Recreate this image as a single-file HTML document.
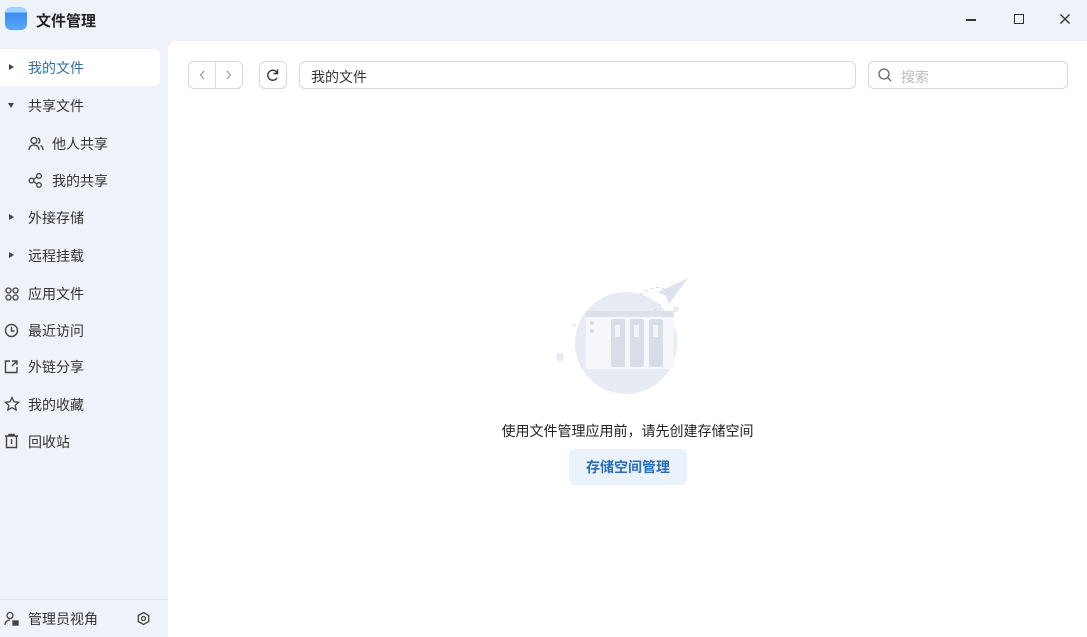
<!DOCTYPE html>
<html><head><meta charset="utf-8"><style>
*{margin:0;padding:0;box-sizing:border-box}
body{width:1087px;height:637px;overflow:hidden;background:#eff2f8;font-family:"Liberation Sans","Noto Sans CJK SC",sans-serif;position:relative;color:#333}
.abs{position:absolute}
.title{left:36px;top:10px;font-size:15px;font-weight:bold;color:#222}
.logo{left:5px;top:7px;width:22px;height:23px;border-radius:6px;background:linear-gradient(#9fd4ff 0 25%,#3a8ff0 25%,#5aa9f7)}
.main{left:168px;top:41px;width:919px;height:596px;background:#fff;border-top-left-radius:9px}
.nav{left:0;width:160px;height:37px;font-size:14px;color:#333;display:flex;align-items:center}
.nav .t{position:absolute;left:28px}
.nav.sub .t{left:52px}
.sel{background:#fff;border-radius:0 6px 6px 0}
.sel .t{color:#2f6fa8}
.tri{position:absolute;left:9px;width:0;height:0}
.tr{border-left:5px solid #444;border-top:3.5px solid transparent;border-bottom:3.5px solid transparent}
.td{border-top:5px solid #444;border-left:3.5px solid transparent;border-right:3.5px solid transparent;left:8px}
.box{border:1px solid #d8d8d8;border-radius:6px;background:#fff}
svg{position:absolute}
</style></head><body>
<div class="abs logo"></div>
<div class="abs title">文件管理</div>
<div class="abs" style="left:966px;top:19px;width:10px;height:1.5px;background:#333"></div>
<div class="abs" style="left:1014px;top:14px;width:10px;height:10px;border:1.3px solid #333"></div>
<svg style="left:1059px;top:13px" width="12" height="12"><path d="M1.5 1.5L10.5 10.5M10.5 1.5L1.5 10.5" stroke="#333" stroke-width="1.4"/></svg>

<div class="abs nav sel" style="top:49px"><span class="tri tr" style="top:15px"></span><span class="t">我的文件</span></div>
<div class="abs nav" style="top:87px"><span class="tri td" style="top:16px"></span><span class="t">共享文件</span></div>
<div class="abs nav sub" style="top:125px"><svg style="left:28px;top:11px" width="16" height="15" fill="none" stroke="#444" stroke-width="1.3"><circle cx="6" cy="4.5" r="3"/><path d="M1 14c0-3 2-5 5-5s5 2 5 5M10 2a3 3 0 010 5.5M12.5 9.5c1.5.7 2.5 2.3 2.5 4.5"/></svg><span class="t">他人共享</span></div>
<div class="abs nav sub" style="top:162px"><svg style="left:28px;top:11px" width="15" height="15" fill="none" stroke="#444" stroke-width="1.3"><circle cx="3.5" cy="7.5" r="2.3"/><circle cx="11" cy="3" r="2.3"/><circle cx="11" cy="12" r="2.3"/><path d="M5.5 6.5L9 4M5.5 8.5L9 11"/></svg><span class="t">我的共享</span></div>
<div class="abs nav" style="top:199px"><span class="tri tr" style="top:15px"></span><span class="t">外接存储</span></div>
<div class="abs nav" style="top:237px"><span class="tri tr" style="top:15px"></span><span class="t">远程挂载</span></div>
<div class="abs nav" style="top:275px"><svg style="left:5px;top:12px" width="14" height="14" fill="none" stroke="#444" stroke-width="1.3"><circle cx="3.5" cy="3.5" r="2.5"/><circle cx="10.5" cy="3.5" r="2.5"/><circle cx="3.5" cy="10.5" r="2.5"/><circle cx="10.5" cy="10.5" r="2.5"/></svg><span class="t">应用文件</span></div>
<div class="abs nav" style="top:312px"><svg style="left:4px;top:11px" width="15" height="15" fill="none" stroke="#444" stroke-width="1.4"><circle cx="7.5" cy="7.5" r="6"/><path d="M7.5 4v4h3"/></svg><span class="t">最近访问</span></div>
<div class="abs nav" style="top:348px"><svg style="left:4px;top:11px" width="15" height="15" fill="none" stroke="#444" stroke-width="1.4"><path d="M6 2H1.5v11.5H13V8M8 2h5v4M13 2L8 7"/></svg><span class="t">外链分享</span></div>
<div class="abs nav" style="top:386px"><svg style="left:4px;top:10px" width="16" height="16" fill="none" stroke="#444" stroke-width="1.3"><path d="M8 1.5l2 4.3 4.6.5-3.4 3.1 1 4.6L8 11.6 3.8 14l1-4.6L1.4 6.3 6 5.8z"/></svg><span class="t">我的收藏</span></div>
<div class="abs nav" style="top:423px"><svg style="left:4px;top:10px" width="15" height="16" fill="none" stroke="#444" stroke-width="1.4"><path d="M1 3h13M5 3V1.5h5V3M2.5 3v11.5h10V3M7.5 6v5"/></svg><span class="t">回收站</span></div>
<div class="abs" style="left:0;top:599px;width:168px;height:1px;background:#e3e6ec"></div>
<div class="abs nav" style="top:600px"><svg style="left:4px;top:11px" width="16" height="16" fill="none" stroke="#444" stroke-width="1.3"><circle cx="6" cy="4.5" r="3"/><path d="M1 14c0-3 2-5 5-5"/><rect x="9" y="10" width="5" height="4" fill="#444"/></svg><span class="t">管理员视角</span><svg style="left:136px;top:11px" width="15" height="15" fill="none" stroke="#444" stroke-width="1.3"><path d="M7.5 1.5l5.2 3v6l-5.2 3-5.2-3v-6z"/><circle cx="7.5" cy="7.5" r="2"/></svg></div>

<div class="abs main"></div>
<div class="abs box" style="left:188px;top:61px;width:55px;height:28px"></div>
<div class="abs" style="left:215px;top:62px;width:1px;height:26px;background:#ddd"></div>
<svg style="left:198px;top:69px" width="10" height="12" fill="none" stroke="#999" stroke-width="1.2"><path d="M6 2L2.5 6 6 10"/></svg>
<svg style="left:224px;top:69px" width="10" height="12" fill="none" stroke="#999" stroke-width="1.2"><path d="M3 2l3.5 4L3 10"/></svg>
<div class="abs box" style="left:259px;top:61px;width:28px;height:28px"></div>
<svg style="left:265px;top:67px" width="16" height="16" fill="none" stroke="#333" stroke-width="1.4"><path d="M12.5 6.5A5 5 0 1 0 12 11M12.5 2.5v4h-4"/></svg>
<div class="abs box" style="left:299px;top:61px;width:557px;height:28px;font-size:14px;padding:5px 11px;color:#333">我的文件</div>
<div class="abs box" style="left:868px;top:61px;width:200px;height:28px;font-size:14px;padding:5px 0 0 32px;color:#bbb">搜索</div>
<svg style="left:877px;top:67px" width="16" height="16" fill="none" stroke="#666" stroke-width="1.3"><circle cx="7" cy="7" r="5"/><path d="M10.5 10.5L14 14"/></svg>

<svg style="left:550px;top:275px" width="145" height="125">
<circle cx="76" cy="68" r="51" fill="#e8ebf3"/>
<circle cx="10" cy="82" r="4" fill="#e6e9f1"/><circle cx="24" cy="50" r="2" fill="#eef0f5"/><circle cx="126" cy="34" r="3" fill="#e6e9f1"/>
<path d="M138 3l-30 14 8 4 3 8z" fill="#dfe3ed"/>
<path d="M90 20 q20-15 30 0 M100 40 l12 -12" stroke="#cfd5e2" stroke-dasharray="3 3" fill="none"/>
<rect x="36" y="36" width="88" height="58" rx="3" fill="#f6f7fa"/>
<rect x="36" y="36" width="88" height="6" fill="#dde1ea"/>
<circle cx="42" cy="48" r="2" fill="#d6dae4"/><circle cx="42" cy="56" r="2" fill="#d6dae4"/>
<rect x="61" y="44" width="14" height="48" rx="2" fill="#d9dde7"/><rect x="80" y="44" width="14" height="48" rx="2" fill="#d9dde7"/><rect x="99" y="44" width="14" height="48" rx="2" fill="#d9dde7"/>
<rect x="65" y="50" width="5" height="12" fill="#f2f4f8"/><rect x="84" y="50" width="5" height="12" fill="#f2f4f8"/><rect x="103" y="50" width="5" height="12" fill="#f2f4f8"/>
</svg>
<div class="abs" style="left:480px;top:421px;width:295px;text-align:center;font-size:14px;color:#222">使用文件管理应用前，请先创建存储空间</div>
<div class="abs" style="left:569px;top:449px;width:118px;height:36px;border-radius:6px;background:#eaf2fc;color:#2b6cb8;font-weight:bold;font-size:14px;text-align:center;line-height:36px">存储空间管理</div>
</body></html>
